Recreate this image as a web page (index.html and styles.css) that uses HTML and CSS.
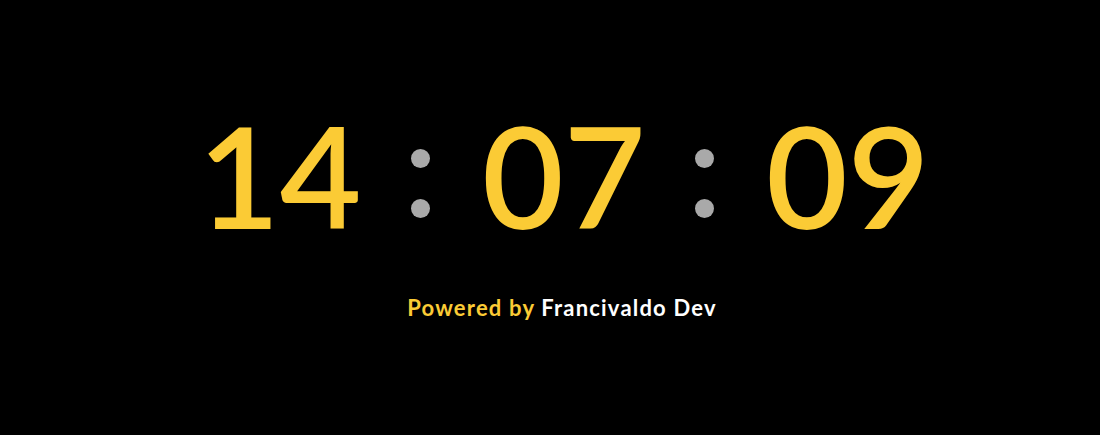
FILE: index.html
```html
<!DOCTYPE html>
<html lang="pt-BR">
<head>
<meta charset="utf-8">
<title>Relógio</title>
<link rel="stylesheet" href="styles.css">
</head>
<body>
<main class="page">
  <div class="clock">
    <span class="unit">14</span>
    <span class="sep" aria-label=":"><span class="dot"></span><span class="dot"></span></span>
    <span class="unit">07</span>
    <span class="sep" aria-label=":"><span class="dot"></span><span class="dot"></span></span>
    <span class="unit">09</span>
  </div>
  <p class="credit"><span class="accent">Powered by</span> Francivaldo Dev</p>
</main>
</body>
</html>
```

FILE: styles.css
```css
html, body {
  margin: 0;
  padding: 0;
  background: #000;
}
.page {
  display: flex;
  flex-direction: column;
  align-items: center;
  padding-top: 104px;
  padding-left: 24px;
  font-family: Lato, "Open Sans", sans-serif;
}
.clock {
  display: flex;
  align-items: flex-start;
  color: #fbcb35;
  font-size: 141px;
  line-height: 1;
  font-weight: 600;
}
.unit {
  width: 160px;
  text-align: center;
}
.sep {
  width: 124px;
  display: flex;
  flex-direction: column;
  align-items: center;
  gap: 31px;
  padding-top: 45px;
}
.dot {
  width: 19px;
  height: 19px;
  border-radius: 50%;
  background: #a9a9a9;
}
.credit {
  margin: 50px 0 0 0;
  font-size: 22px;
  letter-spacing: 1.2px;
  font-weight: 700;
  color: #fff;
  line-height: 1.2;
}
.accent {
  color: #fbcb35;
}
```
